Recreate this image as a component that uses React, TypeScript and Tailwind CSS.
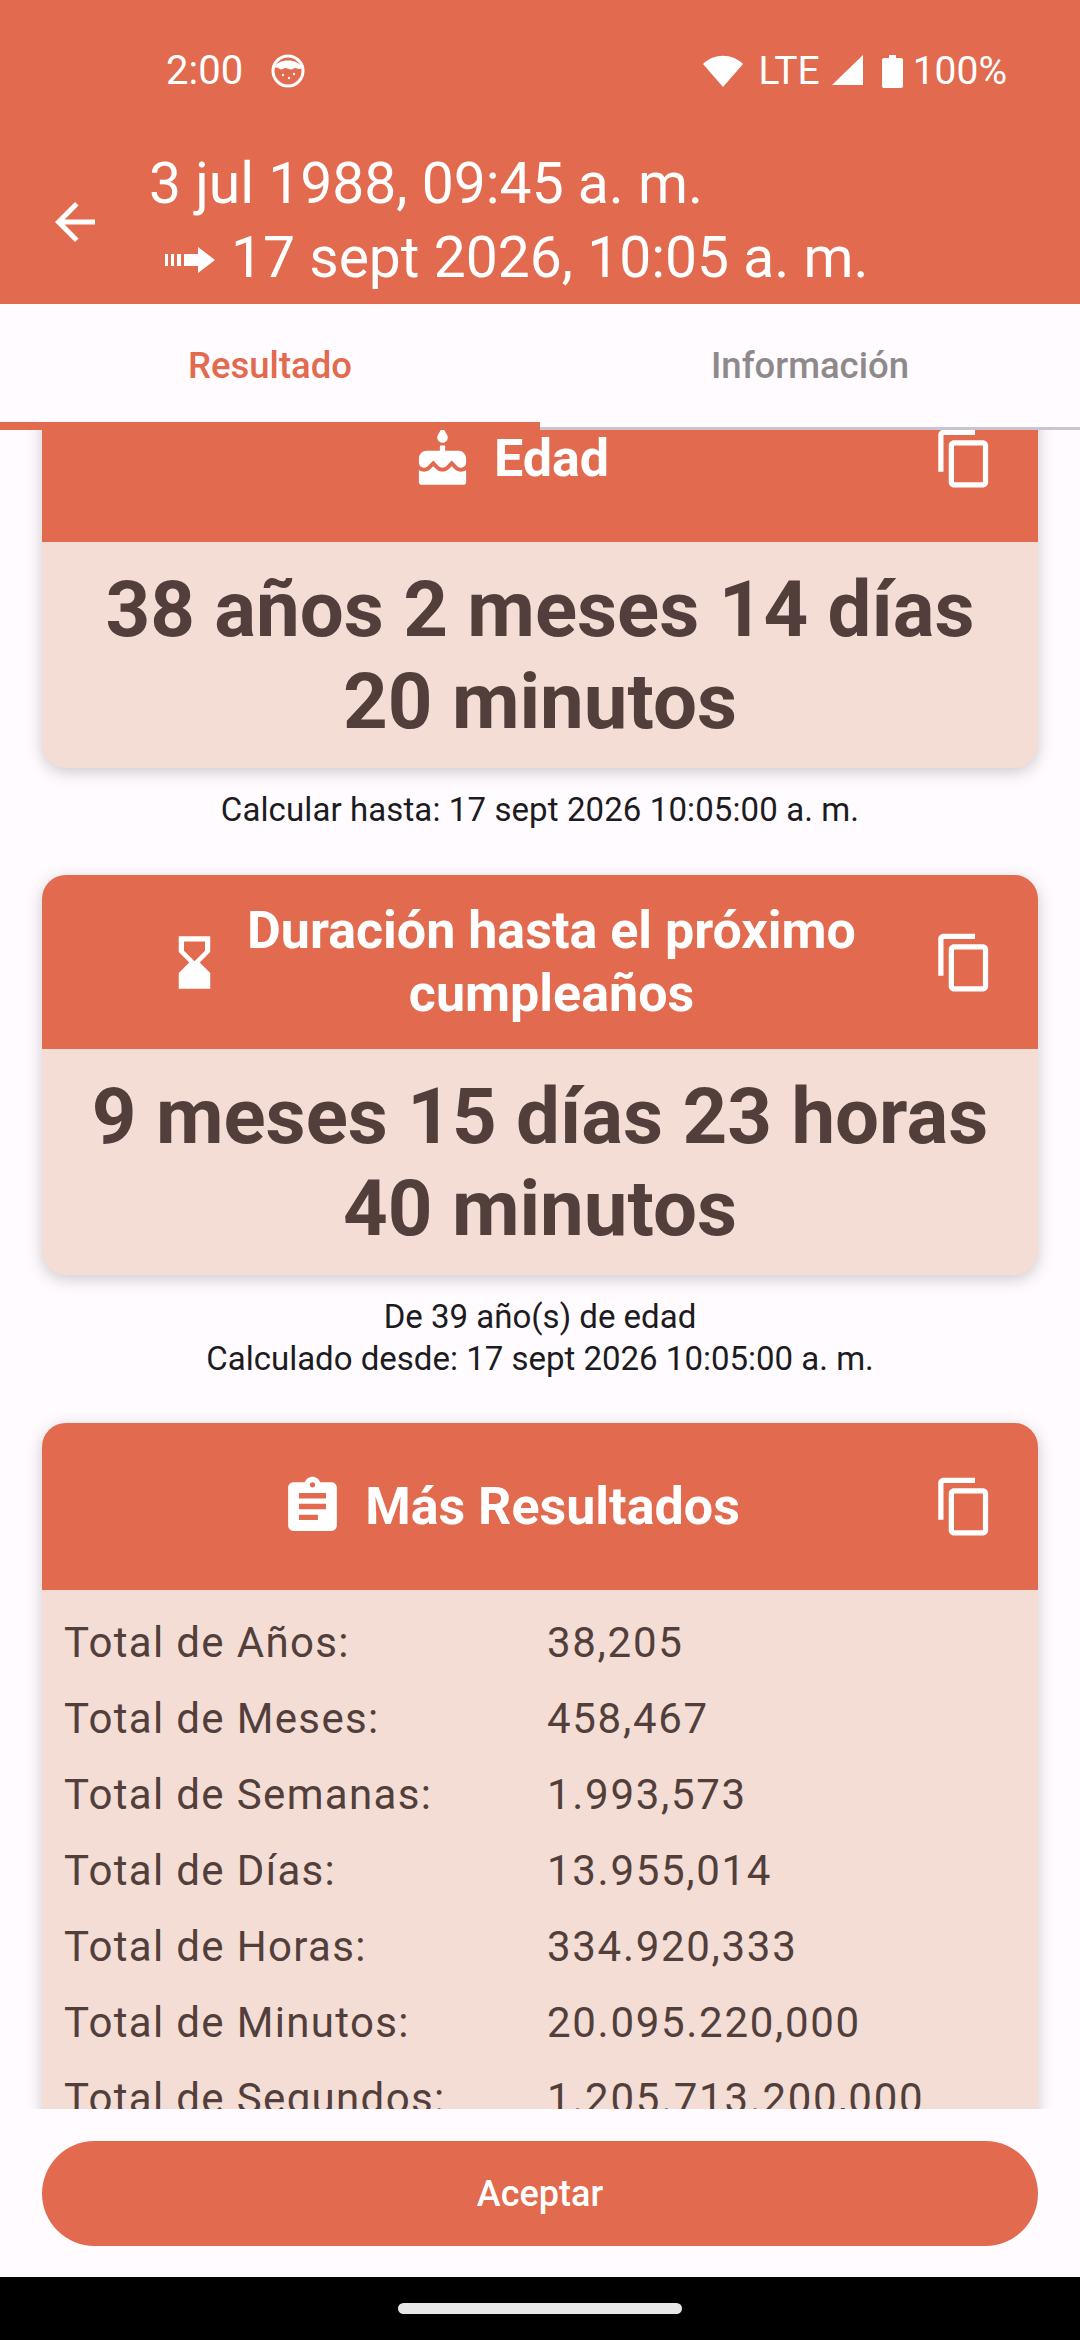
import type { ReactNode } from "react";
import { MdArrowBack, MdAssignment, MdCake, MdHourglassBottom, MdOutlineContentCopy } from "react-icons/md";

const rows = [
  ["Total de Años:", "38,205"],
  ["Total de Meses:", "458,467"],
  ["Total de Semanas:", "1.993,573"],
  ["Total de Días:", "13.955,014"],
  ["Total de Horas:", "334.920,333"],
  ["Total de Minutos:", "20.095.220,000"],
  ["Total de Segundos:", "1.205.713.200,000"],
];

function StatusBar() {
  return (
    <div className="flex h-[72px] items-center justify-between pl-[166px] pr-[73px] pt-[2px] text-[39px] leading-none text-white">
      <div className="flex items-center gap-[28px]">
        <span className="text-[40px]">2:00</span>
        <svg width="34" height="34" viewBox="0 0 34 34">
          <circle cx="17" cy="17" r="15" fill="none" stroke="white" strokeWidth="3" />
          <path d="M3 14 C6 4 28 4 31 14 C27 17 25 12 22 15 C19 17 15 12 12 15 C9 17 7 12 3 14Z" fill="white" />
          <circle cx="12" cy="21" r="1.2" fill="white" />
          <circle cx="18" cy="24" r="1.2" fill="white" />
          <circle cx="23" cy="20" r="1.2" fill="white" />
        </svg>
      </div>
      <div className="flex items-center">
        <svg width="40" height="32" viewBox="0 0 40 32" className="mr-[15px]">
          <path d="M0 9 C11 -2 29 -2 40 9 L20 32Z" fill="white" />
        </svg>
        <span>LTE</span>
        <svg width="33" height="32" viewBox="0 0 33 32" className="ml-[10px] mr-[19px]">
          <path d="M33 0 V30 H2Z" fill="white" />
        </svg>
        <svg width="21" height="33" viewBox="0 0 21 33" className="mr-[10px]">
          <path d="M7 0 H14 V3 H19 Q21 3 21 5 V31 Q21 33 19 33 H2 Q0 33 0 31 V5 Q0 3 2 3 H7Z" fill="white" />
        </svg>
        <span>100%</span>
      </div>
    </div>
  );
}

function Card({ icon, title, children }: { icon: ReactNode; title: ReactNode; children: ReactNode }) {
  return (
    <section className="overflow-hidden rounded-[24px] bg-[#f4ddd5] shadow-[0_4px_16px_rgba(60,50,60,0.25)]">
      <div className="flex min-h-[167px] items-center bg-[#e26a4e] py-[24px] pl-[45px] pr-[42px] text-white">
        <div className="flex flex-1 items-center justify-center gap-[20px]">
          {icon}
          <h2 className="max-w-[612px] text-center text-[52px] font-bold leading-[63px]">{title}</h2>
        </div>
        <MdOutlineContentCopy size={63} />
      </div>
      {children}
    </section>
  );
}

function BigValue({ lines }: { lines: string[] }) {
  return (
    <div className="pb-[20px] pt-[22px] text-center text-[78px] font-bold leading-[92px] text-[#523f3b]">
      {lines.map((line) => (
        <div key={line}>{line}</div>
      ))}
    </div>
  );
}

export default function App() {
  return (
    <div className="flex h-[2340px] w-[1080px] flex-col overflow-hidden bg-[#fffbfe] font-['Roboto',sans-serif]">
      <header className="h-[304px] shrink-0 bg-[#e26a4e] pt-[34px] text-white">
        <StatusBar />
        <div className="flex items-center pl-[45px] pt-[41px]">
          <MdArrowBack size={60} className="mt-[1px]" />
          <div className="ml-[44px] text-[57px] leading-[74px]">
            <div>3 jul 1988, 09:45 a. m.</div>
            <div className="flex items-center pl-[16px]">
              <svg width="50" height="26" viewBox="0 0 50 26" className="mr-[16px] mt-[4px]">
                <path d="M0 7h3v12H0zM6 7h3v12H6zM12 7h4v12h-4zM19 7h14V0l17 13-17 13v-7H19z" fill="white" />
              </svg>
              17 sept 2026, 10:05 a. m.
            </div>
          </div>
        </div>
      </header>

      <nav className="relative z-10 flex h-[126px] shrink-0 bg-[#fffbfe] text-[36.5px] font-medium">
        <div className="flex h-full w-1/2 items-center justify-center border-b-[8px] border-[#e26a4e] pt-[7px] text-[#e26a4e]">
          Resultado
        </div>
        <div className="flex h-full w-1/2 items-center justify-center border-b-[3px] border-[#cac4d0] pt-[2px] text-[#8e8a8c]">
          Información
        </div>
      </nav>

      <main className="relative min-h-0 flex-1 overflow-hidden px-[42px]">
        <div className="-mt-[55px]">
          <Card icon={<MdCake size={63} />} title="Edad">
            <BigValue lines={["38 años 2 meses 14 días", "20 minutos"]} />
          </Card>
          <p className="pb-[44px] pt-[21px] text-center text-[33px] leading-[42px] tracking-[0.1px] text-[#1c1b1f]">
            Calcular hasta: 17 sept 2026 10:05:00 a. m.
          </p>
          <Card icon={<MdHourglassBottom size={63} />} title="Duración hasta el próximo cumpleaños">
            <BigValue lines={["9 meses 15 días 23 horas", "40 minutos"]} />
          </Card>
          <p className="pb-[43px] pt-[21px] text-center text-[33px] leading-[42px] text-[#1c1b1f]">
            De 39 año(s) de edad
            <br />
            Calculado desde: 17 sept 2026 10:05:00 a. m.
          </p>
          <Card icon={<MdAssignment size={65} />} title="Más Resultados">
            <div className="pt-[14px]">
              {rows.map(([label, value]) => (
                <div key={label} className="flex h-[76px] items-center pl-[22px] text-[42px] text-[#523f3b]">
                  <span className="w-[483px] tracking-[1.35px]">{label}</span>
                  <span className="tracking-[1.7px]">{value}</span>
                </div>
              ))}
            </div>
          </Card>
        </div>
      </main>

      <div className="flex h-[168px] shrink-0 items-start bg-[#fffbfe] px-[42px] pt-[32px]">
        <button className="h-[105px] w-full rounded-full bg-[#e26a4e] text-[36px] font-medium text-white">
          Aceptar
        </button>
      </div>

      <div className="flex h-[63px] shrink-0 items-start justify-center bg-black pt-[26px]">
        <div className="h-[11px] w-[284px] rounded-full bg-[#e8e8e8]" />
      </div>
    </div>
  );
}
